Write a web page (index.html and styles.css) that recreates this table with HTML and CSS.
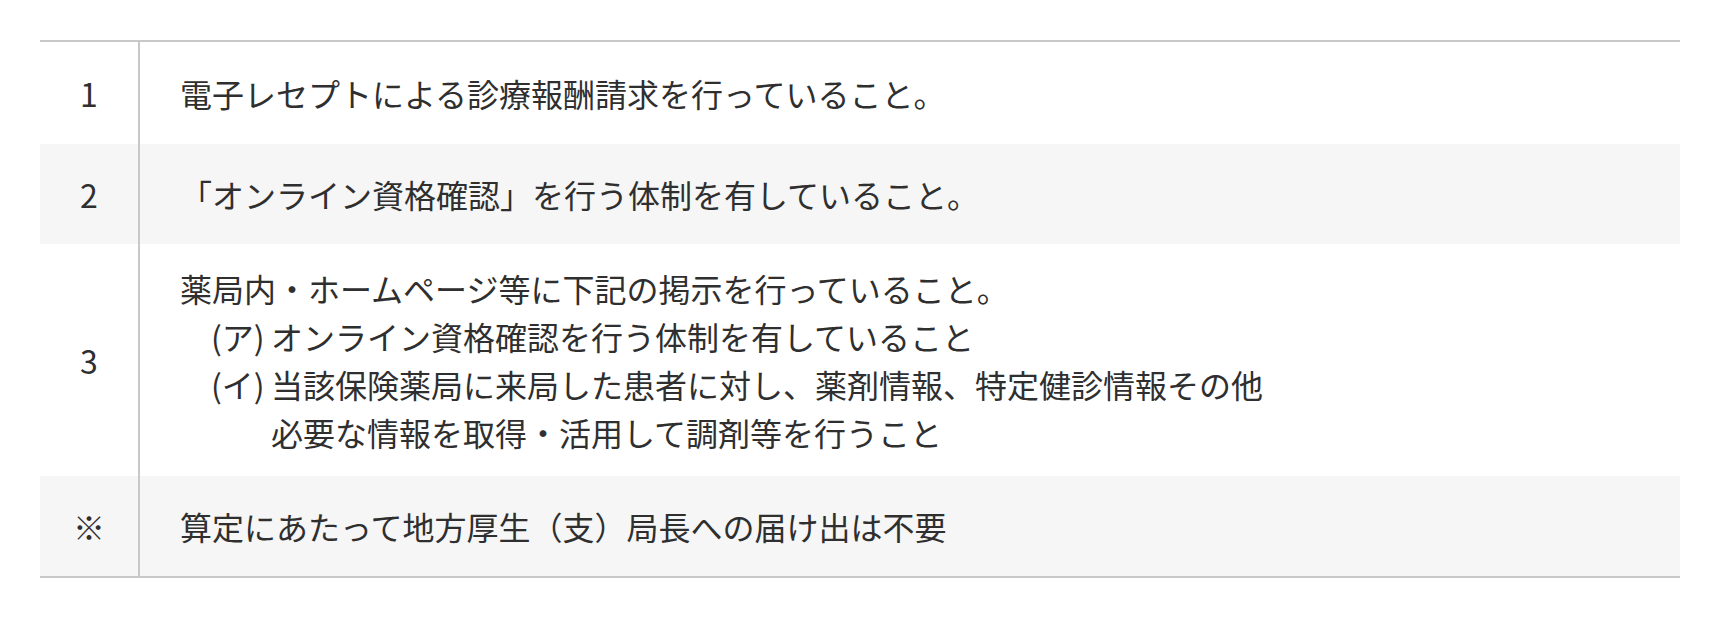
FILE: index.html
```html
<!DOCTYPE html>
<html lang="ja">
<head>
<meta charset="utf-8">
<title>算定要件</title>
<link rel="stylesheet" href="styles.css">
</head>
<body>
<div class="page">
  <table class="req-table">
    <tbody>
      <tr class="row">
        <td class="num">1</td>
        <td class="body">電子レセプトによる診療報酬請求を行っていること。</td>
      </tr>
      <tr class="row alt">
        <td class="num">2</td>
        <td class="body">「オンライン資格確認」を行う体制を有していること。</td>
      </tr>
      <tr class="row">
        <td class="num">3</td>
        <td class="body">
          <div>薬局内・ホームページ等に下記の掲示を行っていること。</div>
          <div class="sub">
            <span class="marker">(ア)</span>
            <span class="sub-text">オンライン資格確認を行う体制を有していること</span>
          </div>
          <div class="sub">
            <span class="marker">(イ)</span>
            <span class="sub-text">当該保険薬局に来局した患者に対し、薬剤情報、特定健診情報その他<br>必要な情報を取得・活用して調剤等を行うこと</span>
          </div>
        </td>
      </tr>
      <tr class="row alt">
        <td class="num">※</td>
        <td class="body">算定にあたって地方厚生（支）局長への届け出は不要</td>
      </tr>
    </tbody>
  </table>
</div>
</body>
</html>
```
FILE: styles.css
```css
* { box-sizing: border-box; }
html, body {
  margin: 0;
  padding: 0;
  background: #ffffff;
}
body {
  font-family: "Noto Sans CJK JP", "Noto Sans", sans-serif;
  color: #2f2f2f;
}
.page {
  padding: 40px 40px 0 40px;
}
.req-table {
  width: 100%;
  border-collapse: collapse;
  border-top: 2px solid #c8c8c8;
  border-bottom: 2px solid #c8c8c8;
  font-size: 32px;
  line-height: 48px;
}
.row.alt {
  background: #f6f6f6;
}
.num {
  width: 99px;
  text-align: center;
  vertical-align: middle;
  border-right: 2px solid #c8c8c8;
  padding: 0;
}
.body {
  padding: 26px 40px;
  vertical-align: middle;
}
.row:first-child .body {
  padding-top: 27px;
  padding-bottom: 27px;
}
.row:nth-child(3) .body {
  padding-top: 20px;
  padding-bottom: 20px;
}
.sub {
  display: flex;
  margin-left: 31px;
}
.marker {
  flex: none;
  width: 60px;
}
.sub-text {
  flex: 1;
}
```
